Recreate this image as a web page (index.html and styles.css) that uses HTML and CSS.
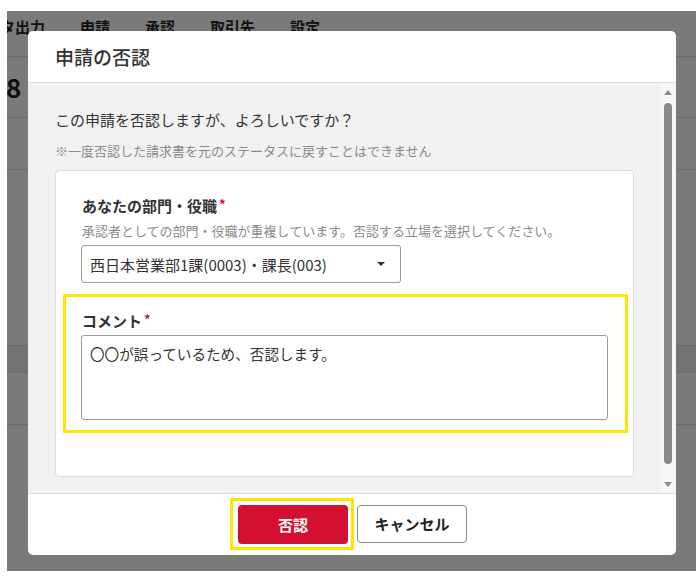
FILE: index.html
```html
<!DOCTYPE html>
<html lang="ja">
<head>
<meta charset="utf-8">
<title>申請の否認</title>
<link rel="stylesheet" href="styles.css">
</head>
<body>
<div class="screen">
  <div class="page">
    <nav class="nav">
      <span class="nav-item nav-first">データ出力</span>
      <span class="nav-item">申請</span>
      <span class="nav-item">承認</span>
      <span class="nav-item">取引先</span>
      <span class="nav-item">設定</span>
    </nav>
    <div class="page-title">8</div>
    <div class="page-row"></div>
    <div class="page-space"></div>
    <div class="page-band"></div>
    <div class="page-row"></div>
  </div>
  <div class="overlay">
    <div class="modal">
      <div class="modal-header">申請の否認</div>
      <div class="modal-body">
        <div class="modal-content">
          <p class="lead">この申請を否認しますが、よろしいですか？</p>
          <p class="note">※一度否認した請求書を元のステータスに戻すことはできません</p>
          <div class="card">
            <div class="field-label">あなたの部門・役職<span class="req">*</span></div>
            <div class="field-help">承認者としての部門・役職が重複しています。否認する立場を選択してください。</div>
            <div class="select">
              <span>西日本営業部1課(0003)・課長(003)</span>
              <span class="caret"></span>
            </div>
            <div class="highlight">
              <div class="field-label tight">コメント<span class="req">*</span></div>
              <div class="textarea">〇〇が誤っているため、否認します。</div>
            </div>
          </div>
        </div>
        <div class="scrollbar">
          <span class="arrow-up"></span>
          <span class="thumb"></span>
          <span class="arrow-down"></span>
        </div>
      </div>
      <div class="modal-footer">
        <div class="btn-frame"><button class="btn btn-danger">否認</button></div>
        <button class="btn btn-cancel">キャンセル</button>
      </div>
    </div>
  </div>
</div>
</body>
</html>
```
FILE: styles.css
```css
* { box-sizing: border-box; }
html, body {
  margin: 0;
  padding: 0;
  background: #ffffff;
  font-family: "Noto Sans CJK JP", "Noto Sans", sans-serif;
  color: #333;
}
.screen {
  position: relative;
  margin: 11px 0 0 7px;
  width: 689px;
  height: 560px;
  overflow: hidden;
  background: #fff;
}
.page { width: 100%; }
.nav {
  height: 46px;
  border-bottom: 1px solid #ddd;
  display: flex;
  gap: 35px;
  padding-top: 5px;
  font-size: 15px;
  line-height: 22px;
  font-weight: 700;
  color: #222;
}
.nav-first { margin-left: -37px; }
.page-title {
  height: 61px;
  border-bottom: 1px solid #ddd;
  font-size: 26px;
  font-weight: 700;
  line-height: 30px;
  padding-top: 15px;
  margin-left: -1px;
  color: #222;
}
.page-row {
  height: 52px;
  border-bottom: 1px solid #ddd;
}
.page-space { height: 175px; }
.page-band {
  height: 28px;
  background: #eee;
  border-top: 1px solid #ddd;
  border-bottom: 1px solid #ddd;
}
.overlay {
  position: absolute;
  inset: 0;
  background: rgba(0, 0, 0, 0.52);
  padding: 20px 0 0 21px;
}
.modal {
  width: 648px;
  height: 524px;
  background: #fff;
  border-radius: 5px;
  overflow: hidden;
  display: flex;
  flex-direction: column;
}
.modal-header {
  height: 52px;
  flex: none;
  border-bottom: 1px solid #ddd;
  padding-left: 27px;
  display: flex;
  align-items: center;
  font-size: 19px;
  font-weight: 500;
  color: #333;
}
.modal-body {
  height: 410px;
  flex: none;
  display: flex;
  background: #f1f1f1;
}
.modal-content {
  flex: 1;
  padding: 26px 26px 0 27px;
  overflow: hidden;
}
.lead {
  margin: 0;
  font-size: 15px;
  line-height: 22px;
  color: #333;
}
.note {
  margin: 11px 0 0;
  font-size: 13px;
  line-height: 18px;
  color: #8a8a8a;
}
.card {
  margin-top: 10px;
  background: #fff;
  border: 1px solid #dcdcdc;
  border-radius: 4px;
  padding: 24px 25px 43px 25px;
}
.field-label {
  font-size: 15px;
  line-height: 22px;
  font-weight: 700;
  color: #333;
  padding-left: 1px;
}
.req {
  color: #d0103a;
  font-size: 13px;
  margin-left: 2px;
  position: relative;
  top: -3px;
}
.field-help {
  margin-top: 4px;
  font-size: 13px;
  line-height: 18px;
  color: #8a8a8a;
  padding-left: 1px;
}
.select {
  margin-top: 5px;
  width: 320px;
  height: 38px;
  border: 1px solid #9a9a9a;
  border-radius: 3px;
  display: flex;
  align-items: center;
  justify-content: space-between;
  padding: 0 15px 0 8px;
  font-size: 15px;
  color: #333;
}
.caret {
  width: 0;
  height: 0;
  border-left: 4px solid transparent;
  border-right: 4px solid transparent;
  border-top: 4px solid #333;
}
.highlight {
  margin: 11px -20px 0 -18px;
  border: 3px solid #ffe600;
  padding: 13px 17px 10px 15px;
}
.tight { margin-bottom: 2px; }
.textarea {
  height: 85px;
  border: 1px solid #9a9a9a;
  border-radius: 3px;
  padding: 7px 8px;
  font-size: 14.6px;
  line-height: 22px;
  color: #333;
}
.scrollbar {
  width: 16px;
  flex: none;
  background: #f6f6f6;
  display: flex;
  flex-direction: column;
  align-items: center;
}
.arrow-up {
  margin-top: 7px;
  width: 0;
  height: 0;
  border-left: 4px solid transparent;
  border-right: 4px solid transparent;
  border-bottom: 5px solid #8a8a8a;
}
.thumb {
  margin: 8px 0 18px;
  flex: 1;
  width: 8px;
  border-radius: 4px;
  background: #8a8a8a;
}
.arrow-down {
  margin-bottom: 6px;
  width: 0;
  height: 0;
  border-left: 4px solid transparent;
  border-right: 4px solid transparent;
  border-top: 5px solid #8a8a8a;
}
.modal-footer {
  flex: 1;
  border-top: 1px solid #ddd;
  display: flex;
  justify-content: center;
  align-items: center;
  padding: 0 7px 2px 0;
}
.btn-frame {
  border: 3px solid #ffe600;
  padding: 4px 3px 3px 5px;
}
.btn {
  font-family: "Noto Sans CJK JP", "Noto Sans", sans-serif;
  font-size: 15px;
  font-weight: 700;
  width: 110px;
  border-radius: 4px;
  padding: 0;
  cursor: pointer;
}
.btn-danger {
  display: block;
  height: 39px;
  background: #d31032;
  border: none;
  color: #fff;
}
.btn-cancel {
  margin-left: 3px;
  height: 38px;
  background: #fff;
  border: 1px solid #888;
  color: #222;
}
```
